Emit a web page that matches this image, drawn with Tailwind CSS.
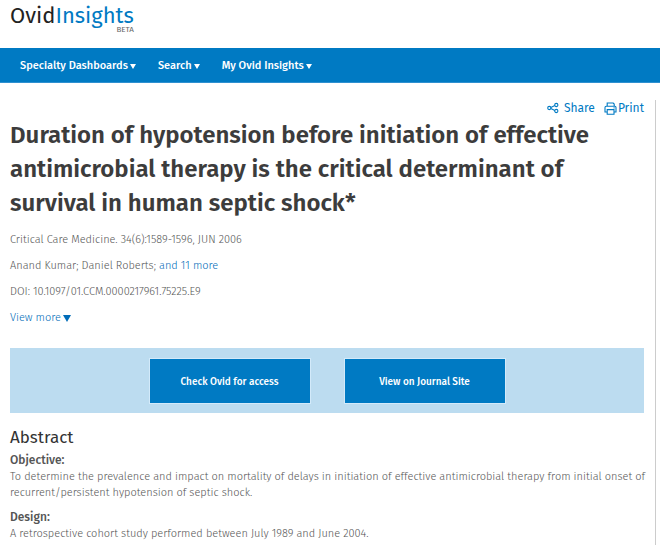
<!DOCTYPE html>
<html lang="en">
<head>
    <meta charset="UTF-8">
    <meta name="viewport" content="width=device-width, initial-scale=1.0">
    <title>Ovid Insights</title>
    <script src="https://cdn.jsdelivr.net/npm/@tailwindcss/browser@4"></script>
</head>
<body class="bg-white font-['Fira_Sans',Roboto,sans-serif] text-[11px] text-[#555] min-h-screen flex flex-col overflow-x-hidden">

<header class="h-12 px-[10px] flex items-start">
    <a href="#" class="flex flex-col items-end">
        <span class="pt-[6px] text-[22px] leading-5 text-[#222]">Ovid<span class="text-[#007ac3]">Insights</span></span>
        <span class="text-[8px] leading-[8px] text-[#666]">BETA</span>
    </a>
</header>

<nav class="h-[35px] px-5 pt-[2px] bg-[#007ac3] border-b border-[#2f90d0] flex items-center gap-[22px] text-[11px] font-medium text-white">
    <button type="button" class="flex items-center gap-[2px]">
        Specialty Dashboards
        <svg class="w-[6px] h-[5px]" viewBox="0 0 6 5" fill="currentColor"><path d="M0 0h6L3 5z"/></svg>
    </button>
    <button type="button" class="flex items-center gap-[2px]">
        Search
        <svg class="w-[6px] h-[5px]" viewBox="0 0 6 5" fill="currentColor"><path d="M0 0h6L3 5z"/></svg>
    </button>
    <button type="button" class="flex items-center gap-[2px]">
        My Ovid Insights
        <svg class="w-[6px] h-[5px]" viewBox="0 0 6 5" fill="currentColor"><path d="M0 0h6L3 5z"/></svg>
    </button>
</nav>

<main class="grow mt-[17px] mr-1 pl-[10px] pr-[5px] border-r border-[#ccc]">
    <div class="h-4 mr-[6px] flex items-center justify-end gap-[9px] text-xs leading-4 text-[#007ac3]">
        <button type="button" class="flex items-center gap-[5px]">
            <svg class="w-3 h-3" viewBox="0 0 12 12" fill="none" stroke="currentColor" stroke-width="1.1"><circle cx="2.3" cy="6" r="1.6"/><circle cx="9.3" cy="3" r="1.6"/><circle cx="9.3" cy="9" r="1.6"/><path d="M3.8 5.4l4-1.8M3.8 6.6l4 1.8"/></svg>
            Share
        </button>
        <button type="button" class="flex items-center gap-px">
            <svg class="w-[13px] h-[13px]" viewBox="0 0 13 13" fill="none" stroke="currentColor" stroke-width="1.1"><path d="M3.2 4.2V1h6l1 1v2.2M3 10H1V5.4c0-.7.5-1.2 1.2-1.2h8.6c.7 0 1.2.5 1.2 1.2V10h-2"/><path d="M3.2 7.6h6.8v4.6H3.2z"/><path d="M9.6 5.9h1"/></svg>
            Print
        </button>
    </div>

    <h1 class="mt-[2px] text-2xl leading-[34px] font-semibold text-[#3c3c3c]">Duration of hypotension before initiation of effective antimicrobial therapy is the critical determinant of survival in human septic shock*</h1>

    <div class="mt-[7px] leading-[26px] font-light">
        <p>Critical Care Medicine. 34(6):1589-1596, JUN 2006</p>
        <p>Anand Kumar; Daniel Roberts; <a href="#" class="text-[#006cb8]">and 11 more</a></p>
        <p>DOI: 10.1097/01.CCM.0000217961.75225.E9</p>
        <button type="button" class="flex items-center gap-[2px] text-[#006cb8]">
            View more
            <svg class="w-2 h-[7px]" viewBox="0 0 8 7" fill="currentColor"><path d="M0 0h8L4 7z"/></svg>
        </button>
    </div>

    <div class="mt-[17px] mr-[6px] h-[65px] pt-px bg-[#bcdcf0] flex items-center justify-center gap-[35px] text-[10px] font-medium text-white">
        <button type="button" class="w-40 h-11 pt-[2px] bg-[#007ac3] ring-1 ring-[#d3eafa]">Check Ovid for access</button>
        <button type="button" class="w-40 h-11 pt-[2px] bg-[#007ac3] ring-1 ring-[#d3eafa]">View on Journal Site</button>
    </div>

    <section class="mt-[13px] leading-4 font-light">
        <h2 class="text-[17px] leading-6 font-normal text-[#333]">Abstract</h2>
        <h3 class="mt-[2px] text-xs leading-[17px] font-medium text-[#555]">Objective:</h3>
        <p>To determine the prevalence and impact on mortality of delays in initiation of effective antimicrobial therapy from initial onset of recurrent/persistent hypotension of septic shock.</p>
        <h3 class="mt-2 text-xs leading-[17px] font-medium text-[#555]">Design:</h3>
        <p>A retrospective cohort study performed between July 1989 and June 2004.</p>
    </section>
</main>

</body>
</html>
